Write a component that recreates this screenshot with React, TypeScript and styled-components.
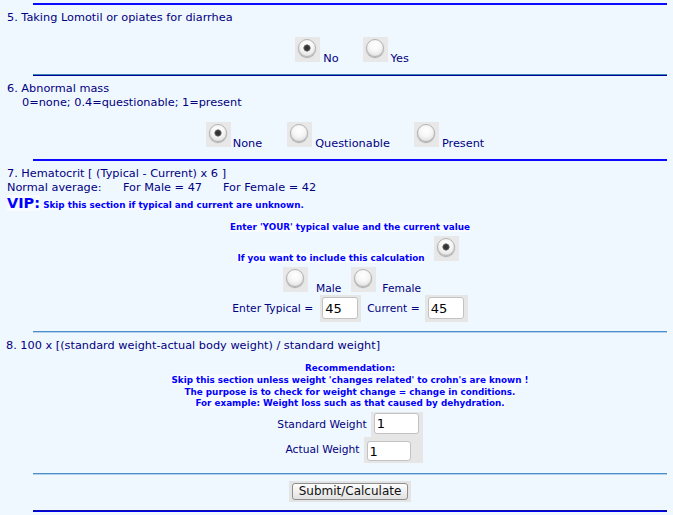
import React from "react";
import styled, { createGlobalStyle } from "styled-components";

const Global = createGlobalStyle`
  html, body { margin: 0; padding: 0; background: #f0f8ff; }
  body {
    font-family: "DejaVu Sans", Verdana, sans-serif;
    font-size: 11.3px;
    color: #000080;
  }
`;

const Page = styled.div`
  width: 673px;
  padding-top: 3px;
  padding-bottom: 10px;
`;

type RuleKind = "blue" | "dual" | "thin" | "end";

const Rule = styled.div<{ $kind: RuleKind; $mt?: number }>`
  margin: ${(p) => p.$mt ?? 0}px 6px 0 33px;
  height: 2px;
  box-sizing: border-box;
  background: ${(p) =>
    p.$kind === "blue"
      ? "#0a0aff"
      : p.$kind === "dual"
      ? "#00009c"
      : p.$kind === "thin"
      ? "#b4d0ea"
      : "#0000f0"};
  border-top: ${(p) =>
    p.$kind === "dual"
      ? "1px solid #3b87b0"
      : p.$kind === "thin"
      ? "1px solid #4a8fcc"
      : p.$kind === "end"
      ? "1px solid #1010a0"
      : "none"};
`;

const Title = styled.div<{ $mt?: number; $indent?: number }>`
  margin-top: ${(p) => p.$mt ?? 6}px;
  padding-left: ${(p) => p.$indent ?? 7}px;
  height: 14px;
  line-height: 14px;
  white-space: pre;
`;

const StatsLine = styled.div`
  padding-left: 7px;
  height: 14px;
  line-height: 14px;
  display: flex;
  white-space: pre;
`;

const StatCell = styled.span<{ $w?: number }>`
  width: ${(p) => (p.$w ? `${p.$w}px` : "auto")};
`;

const VipLine = styled.div`
  padding-left: 7px;
  height: 18px;
  line-height: 16px;
  font-size: 8.8px;
  font-weight: bold;
  color: #0000ff;
  white-space: nowrap;
`;

const VipMark = styled.span`
  font-size: 14.5px;
  background: #f9fcff;
`;

const Note = styled.span`
  background: #f9fcff;
`;

const CenterLine = styled.div<{
  $mt?: number;
  $size?: number;
  $lh?: number;
  $h: number;
  $bold?: boolean;
  $shift?: number;
}>`
  margin: ${(p) => p.$mt ?? 0}px 6px 0 33px;
  padding-left: ${(p) => Math.max(0, (p.$shift ?? 0) * 2)}px;
  padding-right: ${(p) => Math.max(0, -(p.$shift ?? 0) * 2)}px;
  height: ${(p) => p.$h}px;
  text-align: center;
  white-space: nowrap;
  font-size: ${(p) => p.$size ?? 11.3}px;
  line-height: ${(p) => p.$lh ?? 13}px;
  font-weight: ${(p) => (p.$bold ? "bold" : "normal")};
  color: ${(p) => (p.$bold ? "#0000ff" : "#000080")};
`;

const RadioBox = styled.span`
  display: inline-block;
  vertical-align: baseline;
  width: 25px;
  height: 25px;
  background: #e8e8e8;
`;

const RadioCircle = styled.span<{ $checked?: boolean }>`
  display: block;
  width: 18px;
  height: 18px;
  margin: 2px 0 0 3px;
  box-sizing: border-box;
  border-radius: 50%;
  border: 1px solid #b3b3b3;
  box-shadow: 0 1px 1px rgba(0, 0, 0, 0.28);
  background: ${(p) =>
    p.$checked
      ? "radial-gradient(circle at 50% 50%, #2e2e2e 0, #3a3a3a 2.4px, #8a8a8a 3.4px, transparent 3.9px), radial-gradient(circle at 50% 35%, #ffffff 0, #f6f6f6 45%, #d6d6d6 100%)"
      : "radial-gradient(circle at 50% 35%, #ffffff 0, #f6f6f6 45%, #d6d6d6 100%)"};
`;

const Label = styled.span<{ $l?: number; $r?: number }>`
  padding-left: ${(p) => p.$l ?? 0}px;
  padding-right: ${(p) => p.$r ?? 0}px;
`;

const Radio = ({ checked }: { checked?: boolean }) => (
  <RadioBox>
    <RadioCircle $checked={checked} />
  </RadioBox>
);

const InputWell = styled.span<{ $pt?: number; $pr?: number; $pb?: number; $pl?: number }>`
  display: inline-block;
  vertical-align: middle;
  background: #e6e6e6;
  padding: ${(p) => `${p.$pt ?? 2}px ${p.$pr ?? 3}px ${p.$pb ?? 3}px ${p.$pl ?? 2}px`};
`;

const TextInput = styled.input<{ $w: number; $h: number }>`
  display: block;
  box-sizing: border-box;
  width: ${(p) => p.$w}px;
  height: ${(p) => p.$h}px;
  margin: 0;
  padding: 0 2px;
  border: 1px solid #c2c2c2;
  border-radius: 3px;
  background: #ffffff;
  font-family: "DejaVu Sans", Verdana, sans-serif;
  font-size: 13px;
  color: #000000;
  outline: none;
`;

const Highlight = styled.span`
  background: #f9fcff;
`;

const SubmitRow = styled.div`
  margin: 6px 6px 0 33px;
  display: flex;
  justify-content: center;
`;

const SubmitWell = styled.span`
  display: inline-block;
  background: #e4e4e4;
  padding: 2px 3px 2px 3px;
`;

const SubmitButton = styled.button`
  display: block;
  height: 17px;
  margin: 0;
  padding: 0 6px;
  box-sizing: border-box;
  border: 1px solid #8e8e8e;
  border-radius: 3px;
  background: linear-gradient(#fdfdfd, #e2e2e2);
  font-family: "DejaVu Sans", Verdana, sans-serif;
  font-size: 12px;
  line-height: 15px;
  color: #111111;
`;

export default function App() {
  return (
    <Page>
      <Global />
      <Rule $kind="blue" />

      <Title>5. Taking Lomotil or opiates for diarrhea</Title>
      <CenterLine $mt={12} $h={28} $shift={2}>
        <Radio checked />
        <Label $l={3} $r={24}>No</Label>
        <Radio />
        <Label $l={3}>Yes</Label>
      </CenterLine>

      <Rule $kind="dual" $mt={9} />

      <Title>6. Abnormal mass</Title>
      <Title $mt={0} $indent={22}>0=none; 0.4=questionable; 1=present</Title>
      <CenterLine $mt={12} $h={28} $shift={-5}>
        <Radio checked />
        <Label $l={2} $r={25}>None</Label>
        <Radio />
        <Label $l={3} $r={24}>Questionable</Label>
        <Radio />
        <Label $l={3}>Present</Label>
      </CenterLine>

      <Rule $kind="blue" $mt={9} />

      <Title>7. Hematocrit [ (Typical - Current) x 6 ]</Title>
      <StatsLine>
        <StatCell $w={116}>Normal average:</StatCell>
        <StatCell $w={100}>For Male = 47</StatCell>
        <StatCell>For Female = 42</StatCell>
      </StatsLine>
      <VipLine>
        <VipMark>VIP:</VipMark> <Note>Skip this section if typical and current are unknown.</Note>
      </VipLine>

      <CenterLine $mt={8} $h={12} $size={8.8} $lh={12} $bold>
        <Highlight>Enter 'YOUR' typical value and the current value</Highlight>
      </CenterLine>
      <CenterLine $mt={3} $h={28} $size={8.8} $lh={12} $bold $shift={-2}>
        <Label $r={9}>
          <Highlight>If you want to include this calculation</Highlight>
        </Label>
        <Radio checked />
      </CenterLine>
      <CenterLine $mt={3} $h={28} $size={10.7} $shift={2}>
        <Radio />
        <Label $l={8} $r={10}>Male</Label>
        <Radio />
        <Label $l={6}>Female</Label>
      </CenterLine>
      <CenterLine $mt={0} $h={27} $size={10.7} $lh={13}>
        <Label $r={7}>Enter Typical =</Label>
        <InputWell>
          <TextInput $w={36} $h={22} defaultValue="45" />
        </InputWell>
        <Label $l={6} $r={5}>Current =</Label>
        <InputWell $pl={3} $pr={4}>
          <TextInput $w={36} $h={22} defaultValue="45" />
        </InputWell>
      </CenterLine>

      <Rule $kind="thin" $mt={9} />

      <Title $mt={6} $indent={6}>
        8. 100 x [(standard weight-actual body weight) / standard weight]
      </Title>

      <CenterLine $mt={10} $h={47} $size={8.8} $lh={11.75} $bold>
        <Highlight>Recommendation:</Highlight>
        <br />
        <Highlight>Skip this section unless weight 'changes related' to crohn's are known !</Highlight>
        <br />
        <Highlight>The purpose is to check for weight change = change in conditions.</Highlight>
        <br />
        <Highlight>For example: Weight loss such as that caused by dehydration.</Highlight>
      </CenterLine>

      <CenterLine $mt={2} $h={25} $size={10.7} $lh={13}>
        <Label $r={4}>Standard Weight</Label>
        <InputWell $pt={1} $pb={3} $pl={3} $pr={4}>
          <TextInput $w={45} $h={21} defaultValue="1" />
        </InputWell>
      </CenterLine>
      <CenterLine $mt={0} $h={26} $size={10.7} $lh={13} $shift={4}>
        <Label $r={4}>Actual Weight</Label>
        <InputWell $pt={4} $pb={2} $pl={3} $pr={12}>
          <TextInput $w={44} $h={20} defaultValue="1" />
        </InputWell>
      </CenterLine>

      <Rule $kind="thin" $mt={10} />

      <SubmitRow>
        <SubmitWell>
          <SubmitButton type="button">Submit/Calculate</SubmitButton>
        </SubmitWell>
      </SubmitRow>

      <Rule $kind="end" $mt={8} />
    </Page>
  );
}
